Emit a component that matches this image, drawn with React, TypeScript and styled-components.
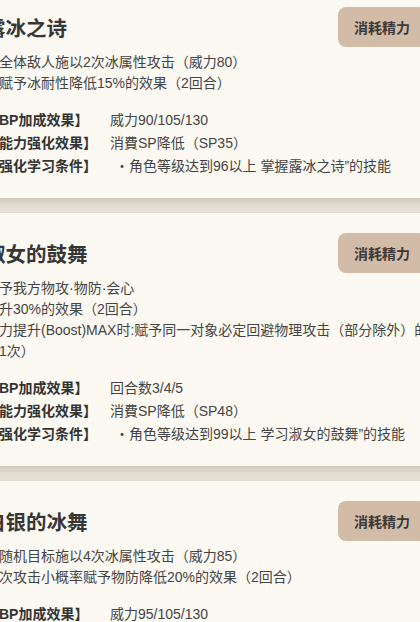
import React from "react";
import styled, { createGlobalStyle } from "styled-components";

const FONT = `"Liberation Sans", "Noto Sans CJK SC", "Noto Sans", sans-serif`;

const GlobalStyle = createGlobalStyle`
  html, body {
    margin: 0;
    padding: 0;
    background: #ebe5da;
    overflow: hidden;
  }
  body {
    font-family: ${FONT};
    color: #3a3a3a;
  }
`;

const Page = styled.div`
  display: flex;
  flex-direction: column;
  gap: 15px;
  width: 477px;
  margin-top: -13px;
  margin-left: -33px;
`;

const Card = styled.section`
  background: #fcf9f2;
  padding: 20px 18px;
  box-shadow: 0 4px 10px rgba(70, 55, 30, 0.2);
`;

const Header = styled.div`
  display: flex;
  align-items: center;
  justify-content: space-between;
  height: 40px;
`;

const Title = styled.h2`
  margin: 0;
  font-family: "Noto Sans CJK SC", "Noto Sans", sans-serif;
  font-size: 20.5px;
  line-height: 28px;
  font-weight: 700;
  color: #363636;
  white-space: nowrap;
`;

const CostButton = styled.button`
  height: 40px;
  padding: 0 16px;
  border: none;
  border-radius: 8px;
  background: #d2bca8;
  color: #3a3a3a;
  font-family: "Noto Sans CJK SC", "Noto Sans", sans-serif;
  font-size: 14px;
  font-weight: 700;
  white-space: nowrap;
`;

const Desc = styled.div`
  margin-top: 5px;
  font-size: 14px;
  line-height: 21px;
  color: #444;
`;

const DescLine = styled.div`
  white-space: nowrap;
`;

const Bonus = styled.div`
  margin-top: 15px;
  display: grid;
  grid-template-columns: 125px 1fr;
  font-size: 14px;
  line-height: 23px;
`;

const Label = styled.div`
  font-weight: 700;
  color: #333;
  white-space: nowrap;
`;

const Value = styled.div<{ $indent?: number }>`
  color: #444;
  white-space: nowrap;
  padding-left: ${(p) => p.$indent ?? 0}px;
`;

type Skill = {
  name: string;
  desc: string[];
  bp: string;
  boost: string;
  cond: string;
};

const skills: Skill[] = [
  {
    name: "露冰之诗",
    desc: ["对全体敌人施以2次冰属性攻击（威力80）", "并赋予冰耐性降低15%的效果（2回合）"],
    bp: "威力90/105/130",
    boost: "消費SP降低（SP35）",
    cond: "・角色等级达到96以上 掌握露冰之诗”的技能",
  },
  {
    name: "淑女的鼓舞",
    desc: [
      "赋予我方物攻·物防·会心",
      "提升30%的效果（2回合）",
      "能力提升(Boost)MAX时:赋予同一对象必定回避物理攻击（部分除外）的效果",
      "（1次）",
    ],
    bp: "回合数3/4/5",
    boost: "消費SP降低（SP48）",
    cond: "・角色等级达到99以上 学习淑女的鼓舞”的技能",
  },
  {
    name: "白银的冰舞",
    desc: ["对随机目标施以4次冰属性攻击（威力85）", "每次攻击小概率赋予物防降低20%的效果（2回合）"],
    bp: "威力95/105/130",
    boost: "消費SP降低（SP40）",
    cond: "・角色等级达到99以上 掌握白银的冰舞”的技能",
  },
];

export default function App() {
  return (
    <>
      <GlobalStyle />
      <Page>
        {skills.map((s) => (
          <Card key={s.name}>
            <Header>
              <Title>{s.name}</Title>
              <CostButton>消耗精力</CostButton>
            </Header>
            <Desc>
              {s.desc.map((d, i) => (
                <DescLine key={i}>{d}</DescLine>
              ))}
            </Desc>
            <Bonus>
              <Label>【BP加成效果】</Label>
              <Value>{s.bp}</Value>
              <Label>【能力强化效果】</Label>
              <Value>{s.boost}</Value>
              <Label>【强化学习条件】</Label>
              <Value $indent={5}>{s.cond}</Value>
            </Bonus>
          </Card>
        ))}
      </Page>
    </>
  );
}
